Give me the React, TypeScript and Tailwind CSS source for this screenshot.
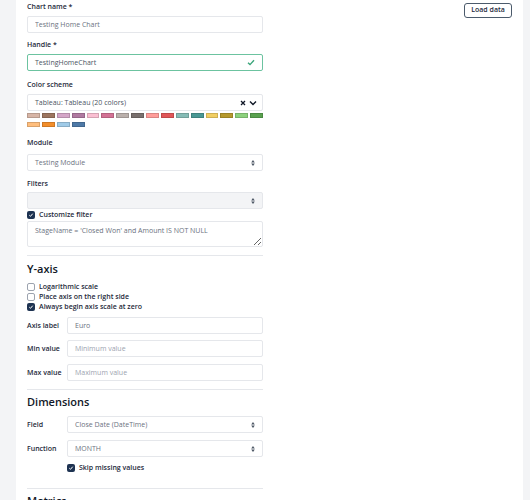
import React from 'react';

const swatches = [
  '#d7b5a6', '#9d7660', '#d4a6c8', '#b07aa1', '#fabfd2', '#d37295', '#bab0ac', '#79706e',
  '#ff9d9a', '#e15759', '#86bcb6', '#499894', '#f1ce63', '#b6992d', '#8cd17d', '#59a14f',
  '#ffbe7d', '#f28e2b', '#a0cbe8', '#4e79a7',
];

const UpDown: React.FC = () => (
  <svg width="4" height="6" viewBox="0 0 4 6" className="shrink-0">
    <path d="M2 0 L3.8 2.4 H0.2 Z" fill="#4b5563" />
    <path d="M0.2 3.6 H3.8 L2 6 Z" fill="#4b5563" />
  </svg>
);

const Label: React.FC<{ children: React.ReactNode; className?: string }> = ({ children, className = '' }) => (
  <div className={`text-[7px] leading-[11px] font-semibold text-[#1e293b] ${className}`}>{children}</div>
);

const Select: React.FC<{ value?: string; disabled?: boolean; className?: string }> = ({ value, disabled, className = '' }) => (
  <div
    className={`h-[17px] flex items-center justify-between border border-[#e5e7eb] rounded-[2px] pl-[7px] pr-[7px] text-[7px] leading-[10px] text-[#6b7280] ${
      disabled ? 'bg-[#f3f4f6]' : 'bg-white'
    } ${className}`}
  >
    <span>{value}</span>
    <UpDown />
  </div>
);

const Check: React.FC<{ checked?: boolean; label: string; className?: string }> = ({ checked, label, className = '' }) => (
  <div className={`flex items-center gap-[4px] h-[10px] ${className}`}>
    {checked ? (
      <span className="w-[8px] h-[8px] rounded-[2px] bg-[#1e3352] flex items-center justify-center">
        <svg width="6" height="6" viewBox="0 0 6 6">
          <path d="M1.3 3.2 L2.5 4.3 L4.7 1.7" stroke="white" strokeWidth="1" fill="none" />
        </svg>
      </span>
    ) : (
      <span className="w-[8px] h-[8px] rounded-[2px] border border-[#9ca3af] bg-white" />
    )}
    <span className="text-[7px] leading-[10px] font-semibold text-[#1e293b]">{label}</span>
  </div>
);

const RowInput: React.FC<{ label: string; value?: string; placeholder?: string; className?: string }> = ({
  label,
  value,
  placeholder,
  className = '',
}) => (
  <div className={`flex items-center h-[17px] ${className}`}>
    <div className="w-[40px] text-[7px] leading-[10px] font-semibold text-[#1e293b]">{label}</div>
    <input
      readOnly
      defaultValue={value}
      placeholder={placeholder}
      className="flex-1 min-w-0 h-[17px] border border-[#e5e7eb] rounded-[2px] px-[7px] text-[7px] text-[#6b7280] placeholder:text-[#9ca3af] outline-none"
    />
  </div>
);

const RowSelect: React.FC<{ label: string; value: string; className?: string }> = ({ label, value, className = '' }) => (
  <div className={`flex items-center h-[17px] ${className}`}>
    <div className="w-[40px] text-[7px] leading-[10px] font-semibold text-[#1e293b]">{label}</div>
    <Select value={value} className="flex-1" />
  </div>
);

const App: React.FC = () => {
  return (
    <div className="flex w-[530px] h-[500px] overflow-hidden font-['Open_Sans',sans-serif]">
      <div className="w-[16px] shrink-0 bg-[#f3f4f6]" />
      <div className="flex-1 bg-white flex items-start justify-between px-[11px]">
        <div className="w-[236px] flex flex-col pt-[1px] *:shrink-0">
          <Label>Chart name *</Label>
          <input
            readOnly
            defaultValue="Testing Home Chart"
            className="mt-[4px] h-[17px] border border-[#e5e7eb] rounded-[2px] px-[7px] text-[7px] text-[#6b7280] outline-none"
          />

          <Label className="mt-[6px]">Handle *</Label>
          <div className="mt-[4px] h-[17px] flex items-center justify-between border border-[#6cc3a0] rounded-[2px] px-[7px]">
            <span className="text-[7px] leading-[10px] text-[#4b5563]">TestingHomeChart</span>
            <svg width="8" height="7" viewBox="0 0 8 7">
              <path d="M1 3.8 L3 5.6 L7 1.2" stroke="#3aa57a" strokeWidth="1.4" fill="none" />
            </svg>
          </div>

          <Label className="mt-[8px]">Color scheme</Label>
          <div className="mt-[4px] h-[17px] flex items-center justify-between border border-[#e5e7eb] rounded-[2px] pl-[7px] pr-[5px]">
            <span className="text-[7px] leading-[10px] text-[#4b5563]">Tableau: Tableau (20 colors)</span>
            <div className="flex items-center gap-[3px]">
              <svg width="6" height="6" viewBox="0 0 6 6">
                <path d="M1 1 L5 5 M5 1 L1 5" stroke="#111827" strokeWidth="1.3" />
              </svg>
              <svg width="8" height="6" viewBox="0 0 8 6">
                <path d="M1 1.5 L4 4.5 L7 1.5" stroke="#111827" strokeWidth="1.4" fill="none" />
              </svg>
            </div>
          </div>
          <div className="mt-[2px] grid grid-cols-16 gap-x-[2px] gap-y-[4px]">
            {swatches.map((c) => (
              <div
                key={c}
                className="h-[5px] border border-black/15"
                style={{ backgroundColor: c }}
              />
            ))}
          </div>

          <Label className="mt-[10px]">Module</Label>
          <Select value="Testing Module" className="mt-[6px]" />

          <Label className="mt-[7px]">Filters</Label>
          <Select disabled className="mt-[3px]" />

          <Check checked label="Customize filter" className="mt-[1px]" />
          <textarea
            readOnly
            defaultValue="StageName = 'Closed Won' and Amount IS NOT NULL"
            className="mt-[1px] h-[26px] border border-[#e5e7eb] rounded-[2px] px-[7px] pt-[4px] text-[7px] leading-[10px] text-[#6b7280] outline-none resize-y"
          />

          <div className="mt-[8px] border-t border-[#e5e7eb]" />
          <h2 className="mt-[5px] text-[11px] leading-[15px] font-semibold text-[#111827]">Y-axis</h2>
          <Check label="Logarithmic scale" className="mt-[6px]" />
          <Check label="Place axis on the right side" />
          <Check checked label="Always begin axis scale at zero" />
          <RowInput label="Axis label" value="Euro" className="mt-[5px]" />
          <RowInput label="Min value" placeholder="Minimum value" className="mt-[6px]" />
          <RowInput label="Max value" placeholder="Maximum value" className="mt-[7px]" />

          <div className="mt-[8px] border-t border-[#e5e7eb]" />
          <h2 className="mt-[4px] text-[11px] leading-[15px] font-semibold text-[#111827]">Dimensions</h2>
          <RowSelect label="Field" value="Close Date (DateTime)" className="mt-[7px]" />
          <RowSelect label="Function" value="MONTH" className="mt-[7px]" />
          <Check checked label="Skip missing values" className="mt-[6px] ml-[40px]" />

          <div className="mt-[15px] border-t border-[#e5e7eb]" />
          <h2 className="mt-[4px] text-[11px] leading-[15px] font-semibold text-[#111827]">Metrics</h2>
        </div>
        <div className="pt-[3px]">
          <button className="h-[15px] w-[48px] border border-[#4b5a6b] rounded-[3px] text-[7px] font-semibold text-[#1e293b] flex items-center justify-center">
            Load data
          </button>
        </div>
      </div>
      <div className="w-[7px] shrink-0 bg-[#f3f4f6]" />
    </div>
  );
};

export default App;
